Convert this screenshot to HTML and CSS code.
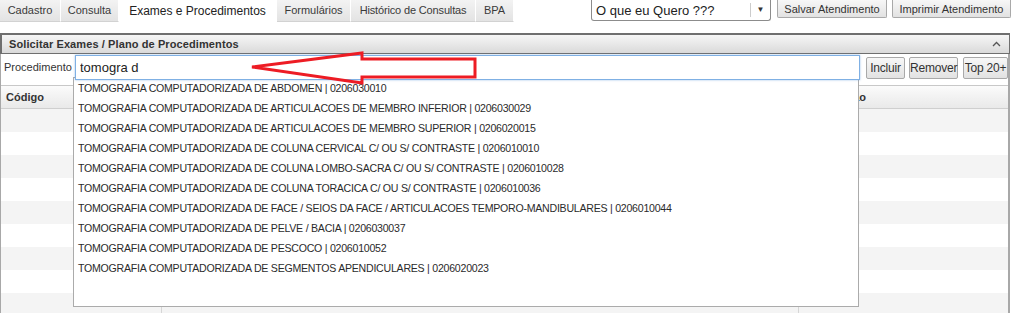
FILE: index.html
```html
<!DOCTYPE html>
<html lang="pt-BR">
<head>
    <meta charset="UTF-8">
    <title>Atendimento</title>
    <link rel="stylesheet" href="styles.css">
</head>
<body>
    <div class="topbar">
        <ul class="tabs">
            <li class="tab-cadastro">Cadastro</li>
            <li class="tab-consulta">Consulta</li>
            <li class="tab-exames active">Exames e Procedimentos</li>
            <li class="tab-form">Formulários</li>
            <li class="tab-hist">Histórico de Consultas</li>
            <li class="tab-bpa">BPA</li>
        </ul>
        <div class="tools">
            <div class="combo">
                <span class="combo-text">O que eu Quero ???</span>
                <span class="combo-arrow">&#9660;</span>
            </div>
            <button class="btn btn-save">Salvar Atendimento</button>
            <button class="btn btn-print">Imprimir Atendimento</button>
        </div>
    </div>

    <div class="panel">
        <div class="panel-header">
            <span>Solicitar Exames / Plano de Procedimentos</span>
            <svg class="chevron" width="9" height="6" viewBox="0 0 9 6">
                <polyline points="1,5 4.5,1.5 8,5" fill="none" stroke="#555" stroke-width="1.3"/>
            </svg>
        </div>
        <div class="panel-body">
            <div class="form-row">
                <label for="proc">Procedimento</label>
                <div class="search">
                    <input type="text" id="proc" value="tomogra d">
                    <svg class="arrow" width="245" height="45" viewBox="0 0 245 45">
                        <polygon points="12,21 122,7 122,13 235,13 235,31 122,31 122,37" fill="none" stroke="#ed1c24" stroke-width="3" stroke-linejoin="miter"/>
                    </svg>
                </div>
                <div class="actions">
                    <button class="btn btn-sm btn-add">Incluir</button>
                    <button class="btn btn-sm btn-remove">Remover</button>
                    <button class="btn btn-sm btn-top">Top 20+</button>
                </div>
            </div>

            <ul class="suggest">
                <li>TOMOGRAFIA COMPUTADORIZADA DE ABDOMEN | 0206030010</li>
                <li>TOMOGRAFIA COMPUTADORIZADA DE ARTICULACOES DE MEMBRO INFERIOR | 0206030029</li>
                <li>TOMOGRAFIA COMPUTADORIZADA DE ARTICULACOES DE MEMBRO SUPERIOR | 0206020015</li>
                <li>TOMOGRAFIA COMPUTADORIZADA DE COLUNA CERVICAL C/ OU S/ CONTRASTE | 0206010010</li>
                <li>TOMOGRAFIA COMPUTADORIZADA DE COLUNA LOMBO-SACRA C/ OU S/ CONTRASTE | 0206010028</li>
                <li>TOMOGRAFIA COMPUTADORIZADA DE COLUNA TORACICA C/ OU S/ CONTRASTE | 0206010036</li>
                <li>TOMOGRAFIA COMPUTADORIZADA DE FACE / SEIOS DA FACE / ARTICULACOES TEMPORO-MANDIBULARES | 0206010044</li>
                <li>TOMOGRAFIA COMPUTADORIZADA DE PELVE / BACIA | 0206030037</li>
                <li>TOMOGRAFIA COMPUTADORIZADA DE PESCOCO | 0206010052</li>
                <li>TOMOGRAFIA COMPUTADORIZADA DE SEGMENTOS APENDICULARES | 0206020023</li>
            </ul>

            <div class="grid">
                <div class="grid-head">
                    <div class="cell">Código</div>
                    <div class="cell"></div>
                    <div class="cell">Observação</div>
                </div>
                <div class="grid-row"><div class="cell"></div><div class="cell"></div><div class="cell"></div></div>
                <div class="grid-row"><div class="cell"></div><div class="cell"></div><div class="cell"></div></div>
                <div class="grid-row"><div class="cell"></div><div class="cell"></div><div class="cell"></div></div>
                <div class="grid-row"><div class="cell"></div><div class="cell"></div><div class="cell"></div></div>
                <div class="grid-row"><div class="cell"></div><div class="cell"></div><div class="cell"></div></div>
                <div class="grid-row"><div class="cell"></div><div class="cell"></div><div class="cell"></div></div>
                <div class="grid-row"><div class="cell"></div><div class="cell"></div><div class="cell"></div></div>
                <div class="grid-row"><div class="cell"></div><div class="cell"></div><div class="cell"></div></div>
                <div class="grid-row"><div class="cell"></div><div class="cell"></div><div class="cell"></div></div>
            </div>
        </div>
    </div>
</body>
</html>
```

FILE: styles.css
```css
* {
    margin: 0;
    padding: 0;
    box-sizing: border-box;
    font-family: "Liberation Sans", Arial, sans-serif;
}

body {
    background-color: #fff;
    color: #333;
    font-size: 11px;
    overflow: hidden;
}

.topbar {
    display: flex;
    justify-content: space-between;
    align-items: flex-start;
    padding-right: 5px;
    height: 33px;
}

.tabs {
    display: flex;
    list-style: none;
}

.tabs li {
    height: 22px;
    line-height: 21px;
    text-align: center;
    background: linear-gradient(#f3f3f3, #e3e3e3);
    border-right: 1px solid #fff;
    border-bottom: 1px solid #d2d2d2;
    color: #3a3a3a;
    font-size: 11px;
    white-space: nowrap;
}

.tabs li.active {
    background: #fff;
    border-bottom-color: #fff;
    font-size: 12px;
    line-height: 23px;
    height: 23px;
    color: #222;
}

.tab-cadastro { width: 61px; }
.tab-consulta { width: 58px; }
.tab-exames { width: 158px; }
.tab-form { width: 74px; }
.tab-hist { width: 125px; letter-spacing: -0.15px; }
.tab-bpa { width: 38px; }

.tools {
    display: flex;
    align-items: flex-start;
}

.combo {
    display: flex;
    align-items: center;
    width: 180px;
    height: 21px;
    border: 1px solid #8c8c8c;
    border-top: none;
    border-radius: 0 0 3px 3px;
    background: #fff;
    margin-right: 1px;
}

.combo-text {
    flex: 1;
    padding-left: 4px;
    font-size: 13px;
    color: #222;
}

.combo-arrow {
    width: 20px;
    border-left: 1px solid #ccc;
    text-align: center;
    font-size: 8px;
    color: #333;
    line-height: 14px;
}

.btn {
    background: linear-gradient(#f7f7f7, #e2e2e2);
    border: 1px solid #a9a9a9;
    border-top: none;
    border-radius: 0 0 2px 2px;
    height: 18px;
    padding: 0;
    font-size: 11px;
    color: #333;
    margin-left: 5px;
    white-space: nowrap;
}

.btn-save {
    width: 110px;
}

.btn-print {
    width: 119px;
}

.panel {
    width: 1010px;
}

.panel-header {
    display: flex;
    justify-content: space-between;
    align-items: center;
    height: 21px;
    padding: 0 8px 0 7px;
    background: linear-gradient(#f6f6f6, #dadada);
    border: 1px solid #6f6f6f;
    border-width: 2px 1px 1px 2px;
    font-weight: bold;
    font-size: 11px;
    letter-spacing: 0.1px;
    color: #333;
}

.panel-body {
    position: relative;
    height: 260px;
    border-left: 1px solid #a8a8a8;
    border-right: 2px solid #a8a8a8;
}

.form-row {
    display: flex;
    align-items: flex-start;
    height: 31px;
    padding-top: 1px;
}

.form-row label {
    flex-shrink: 0;
    width: 74px;
    padding: 6px 0 0 3px;
    font-size: 11px;
    color: #333;
}

.search {
    position: relative;
    flex-shrink: 0;
    z-index: 2;
}

.search input {
    width: 785px;
    height: 25px;
    padding: 0 4px;
    border: 1px solid #7fb0e4;
    box-shadow: 0 0 2px rgba(90, 150, 220, 0.6);
    font-size: 13px;
    color: #222;
    outline: none;
}

.arrow {
    position: absolute;
    left: 165px;
    top: -9px;
}

.actions {
    display: flex;
    padding: 2px 0 0 6px;
}

.btn-sm {
    height: 22px;
    border-top: 1px solid #a9a9a9;
    border-radius: 2px;
    font-size: 12px;
    letter-spacing: -0.2px;
    margin-left: 4px;
}

.btn-add {
    width: 39px;
    margin-left: 0;
}

.btn-remove {
    width: 49px;
}

.btn-top {
    width: 45px;
    margin-left: 5px;
}

.suggest {
    position: absolute;
    left: 72px;
    top: 23px;
    width: 786px;
    height: 230px;
    list-style: none;
    background: #fff;
    border: 1px solid #ababab;
    z-index: 1;
}

.suggest li {
    height: 20px;
    line-height: 20px;
    padding-left: 4px;
    font-size: 10.6px;
    letter-spacing: -0.25px;
    color: #2b2b2b;
    white-space: nowrap;
}

.grid-head,
.grid-row {
    display: grid;
    grid-template-columns: 160px 637px 1fr;
}

.grid-head {
    height: 24px;
    background: linear-gradient(#fbfbfb, #e9e9e9);
    border-top: 1px solid #c8c8c8;
    border-bottom: 1px solid #cfcfcf;
}

.grid-head .cell {
    padding: 5px 0 0 5px;
    font-weight: bold;
    color: #333;
}

.grid-row {
    height: 23px;
}

.grid-row:nth-child(even) {
    background: #f4f4f4;
}

.grid-row .cell + .cell {
    border-left: 1px solid #d6d6d6;
}
```
